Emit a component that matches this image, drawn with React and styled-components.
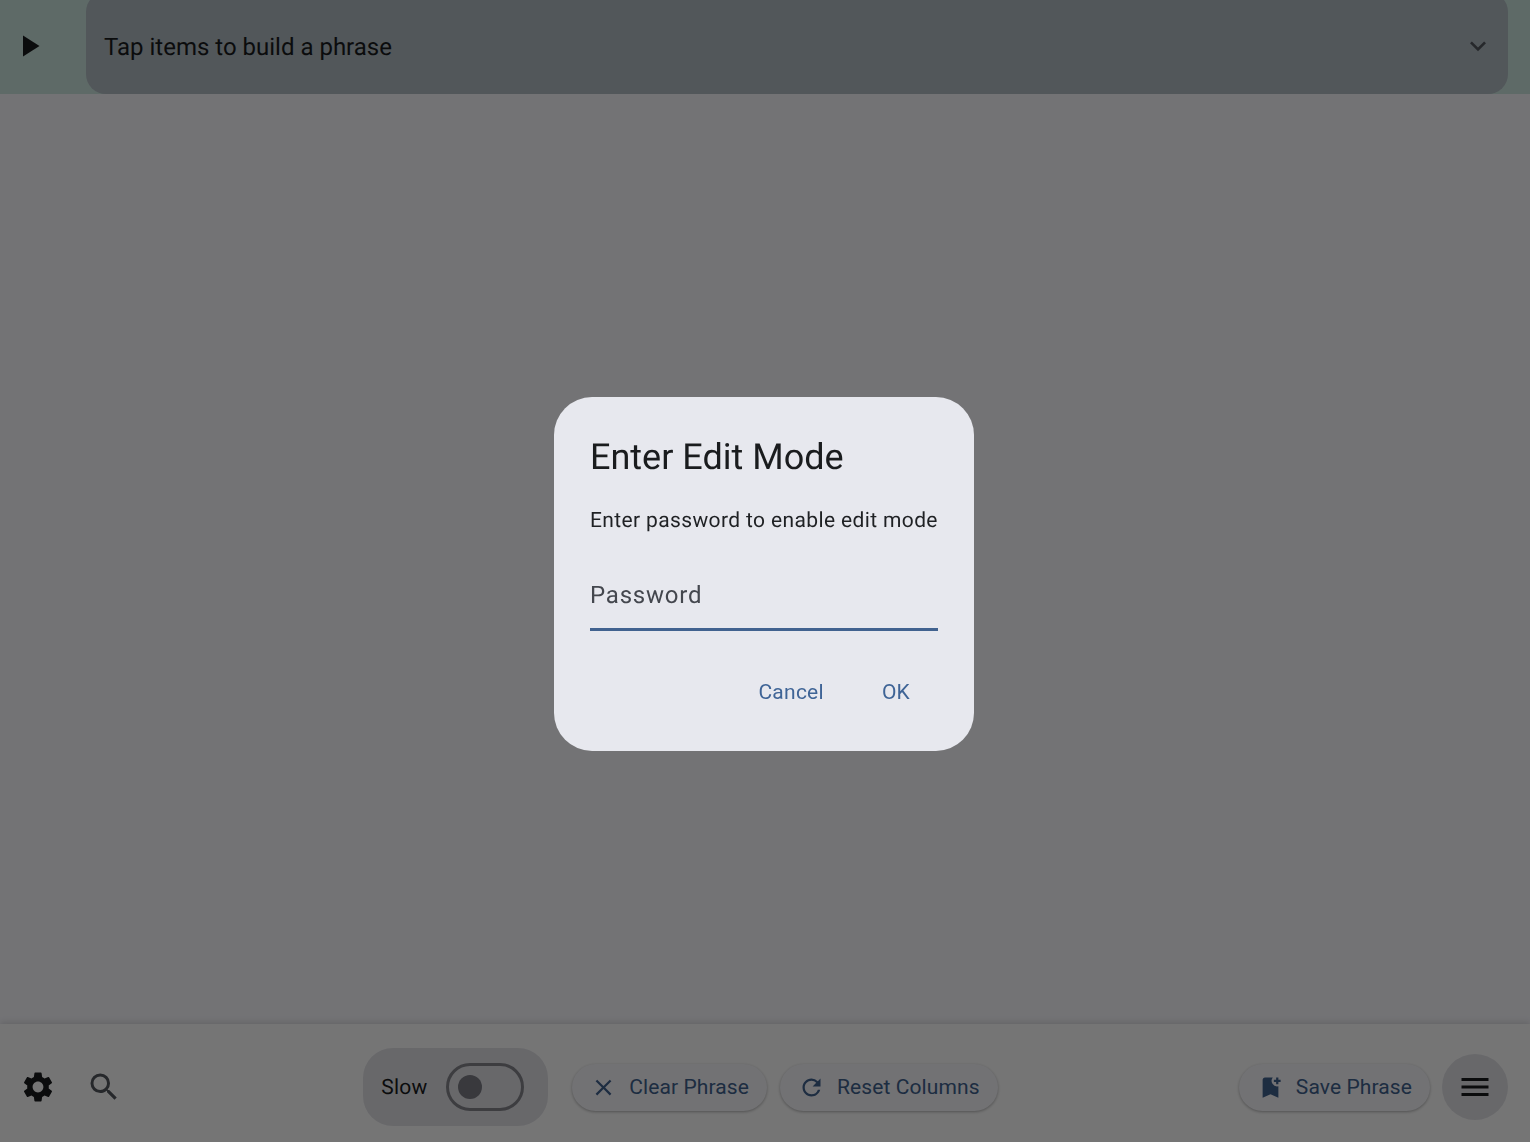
import React from 'react'
import styled, { createGlobalStyle } from 'styled-components'
import {
  MdPlayArrow, MdKeyboardArrowDown, MdSettings, MdSearch, MdClose, MdRefresh, MdBookmarkAdd, MdMenu,
} from 'react-icons/md'

const GlobalStyle = createGlobalStyle`
  html, body { margin: 0; height: 100%; }
  body {
    font-family: Roboto, "Liberation Sans", sans-serif;
    background: #fafaff;
    color: #1a1c1e;
    text-rendering: geometricPrecision;
  }
  #root { height: 100%; }
`

const Page = styled.div`
  height: 1142px;
  display: flex;
  flex-direction: column;
  overflow: hidden;
`
const TopBar = styled.header`
  height: 94px;
  flex: none;
  display: flex;
  align-items: stretch;
  padding-right: 22px;
  background: #cee6e0;
`
const PlayButton = styled.button`
  width: 86px;
  flex: none;
  border: none;
  background: none;
  padding: 0 28px 2px 0;
  display: flex;
  align-items: center;
  justify-content: center;
  color: #1a1c1e;
  font-size: 36px;
`
const PhraseBox = styled.div`
  flex: 1;
  margin-top: -8px;
  display: flex;
  align-items: center;
  justify-content: space-between;
  padding: 6px 14px 0 18px;
  background: #b2bdc4;
  border-radius: 20px;
`
const PhraseHint = styled.span`
  padding-top: 2px;
  font-size: 24px;
  color: #1a1c1e;
`
const Chevron = styled.span`
  display: flex;
  font-size: 32px;
  color: #54575e;
`
const Main = styled.main`
  flex: 1;
`
const BottomBar = styled.footer`
  height: 118px;
  flex: none;
  box-sizing: border-box;
  display: flex;
  align-items: center;
  justify-content: space-between;
  padding: 8px 22px 0 20px;
  background: #ffffff;
  box-shadow: 0 -2px 6px rgba(0, 0, 0, 0.12);
`
const Group = styled.div`
  display: flex;
  align-items: center;
  gap: ${(p) => p.$gap}px;
`
const IconButton = styled.button`
  border: none;
  background: none;
  padding: 0;
  display: flex;
  font-size: 36px;
  color: ${(p) => p.$color};
`
const SlowPill = styled.div`
  width: 185px;
  height: 78px;
  margin-right: 11px;
  box-sizing: border-box;
  display: flex;
  align-items: center;
  justify-content: space-between;
  padding: 0 24px 0 18px;
  border-radius: 30px;
  background: #e3e3e8;
`
const SlowLabel = styled.span`
  padding-top: 2px;
  font-size: 21px;
  letter-spacing: 0.2px;
`
const Switch = styled.div`
  width: 78px;
  height: 48px;
  box-sizing: border-box;
  display: flex;
  align-items: center;
  padding-left: 9px;
  border: 3px solid #85868d;
  border-radius: 24px;
`
const Thumb = styled.div`
  width: 24px;
  height: 24px;
  border-radius: 50%;
  background: #7c7d85;
`
const Chip = styled.button`
  height: 47px;
  box-sizing: border-box;
  display: flex;
  align-items: center;
  gap: 12px;
  padding: 0 18px;
  border: none;
  border-radius: 24px;
  background: #f8f8fd;
  box-shadow: 0 1px 3px rgba(0, 0, 0, 0.3);
  font-family: inherit;
  font-size: 21px;
  letter-spacing: 0.1px;
  color: #41628f;
  svg { font-size: 27px; }
`
const MenuButton = styled.button`
  width: 66px;
  height: 66px;
  border: none;
  border-radius: 33px;
  background: #e3e3e8;
  display: flex;
  align-items: center;
  justify-content: center;
  font-size: 36px;
  color: #1a1c1e;
`
const Scrim = styled.div`
  position: fixed;
  inset: 0;
  box-sizing: border-box;
  padding: 6px 2px 0 0;
  display: flex;
  align-items: center;
  justify-content: center;
  background: rgba(0, 0, 0, 0.54);
  will-change: transform;
`
const Dialog = styled.div`
  width: 420px;
  height: 354px;
  box-sizing: border-box;
  padding: 36px;
  display: flex;
  flex-direction: column;
  border-radius: 38px;
  background: #e7e8ee;
`
const Title = styled.h2`
  margin: 0;
  font-size: 36px;
  line-height: 48px;
  font-weight: 400;
  color: #1a1c1e;
`
const Message = styled.p`
  margin: 25px 0 0;
  font-size: 21px;
  line-height: 30px;
  letter-spacing: 0.37px;
  white-space: nowrap;
  color: #1f2124;
`
const Field = styled.div`
  margin-top: 24px;
  height: 71px;
  box-sizing: border-box;
  display: flex;
  align-items: center;
  padding-top: 2px;
  border-bottom: 3px solid #41628f;
`
const Placeholder = styled.span`
  font-size: 24px;
  letter-spacing: 0.8px;
  color: #44474e;
`
const Actions = styled.div`
  margin-top: 47px;
  display: flex;
  justify-content: flex-end;
  gap: 58px;
  padding-right: 28px;
`
const TextButton = styled.button`
  border: none;
  background: none;
  padding: 0;
  font-family: inherit;
  font-size: 21px;
  line-height: 28px;
  letter-spacing: 0.25px;
  color: #3f6496;
`

export default function App() {
  return (
    <>
      <GlobalStyle />
      <Page>
        <TopBar>
          <PlayButton><MdPlayArrow /></PlayButton>
          <PhraseBox>
            <PhraseHint>Tap items to build a phrase</PhraseHint>
            <Chevron><MdKeyboardArrowDown /></Chevron>
          </PhraseBox>
        </TopBar>
        <Main />
        <BottomBar>
          <Group $gap={30}>
            <IconButton $color="#1a1c1e"><MdSettings /></IconButton>
            <IconButton $color="#54575e"><MdSearch /></IconButton>
          </Group>
          <Group $gap={13}>
            <SlowPill>
              <SlowLabel>Slow</SlowLabel>
              <Switch><Thumb /></Switch>
            </SlowPill>
            <Chip><MdClose />Clear Phrase</Chip>
            <Chip><MdRefresh />Reset Columns</Chip>
          </Group>
          <Group $gap={12}>
            <Chip><MdBookmarkAdd />Save Phrase</Chip>
            <MenuButton><MdMenu /></MenuButton>
          </Group>
        </BottomBar>
      </Page>
      <Scrim>
        <Dialog>
          <Title>Enter Edit Mode</Title>
          <Message>Enter password to enable edit mode</Message>
          <Field><Placeholder>Password</Placeholder></Field>
          <Actions>
            <TextButton>Cancel</TextButton>
            <TextButton>OK</TextButton>
          </Actions>
        </Dialog>
      </Scrim>
    </>
  )
}
